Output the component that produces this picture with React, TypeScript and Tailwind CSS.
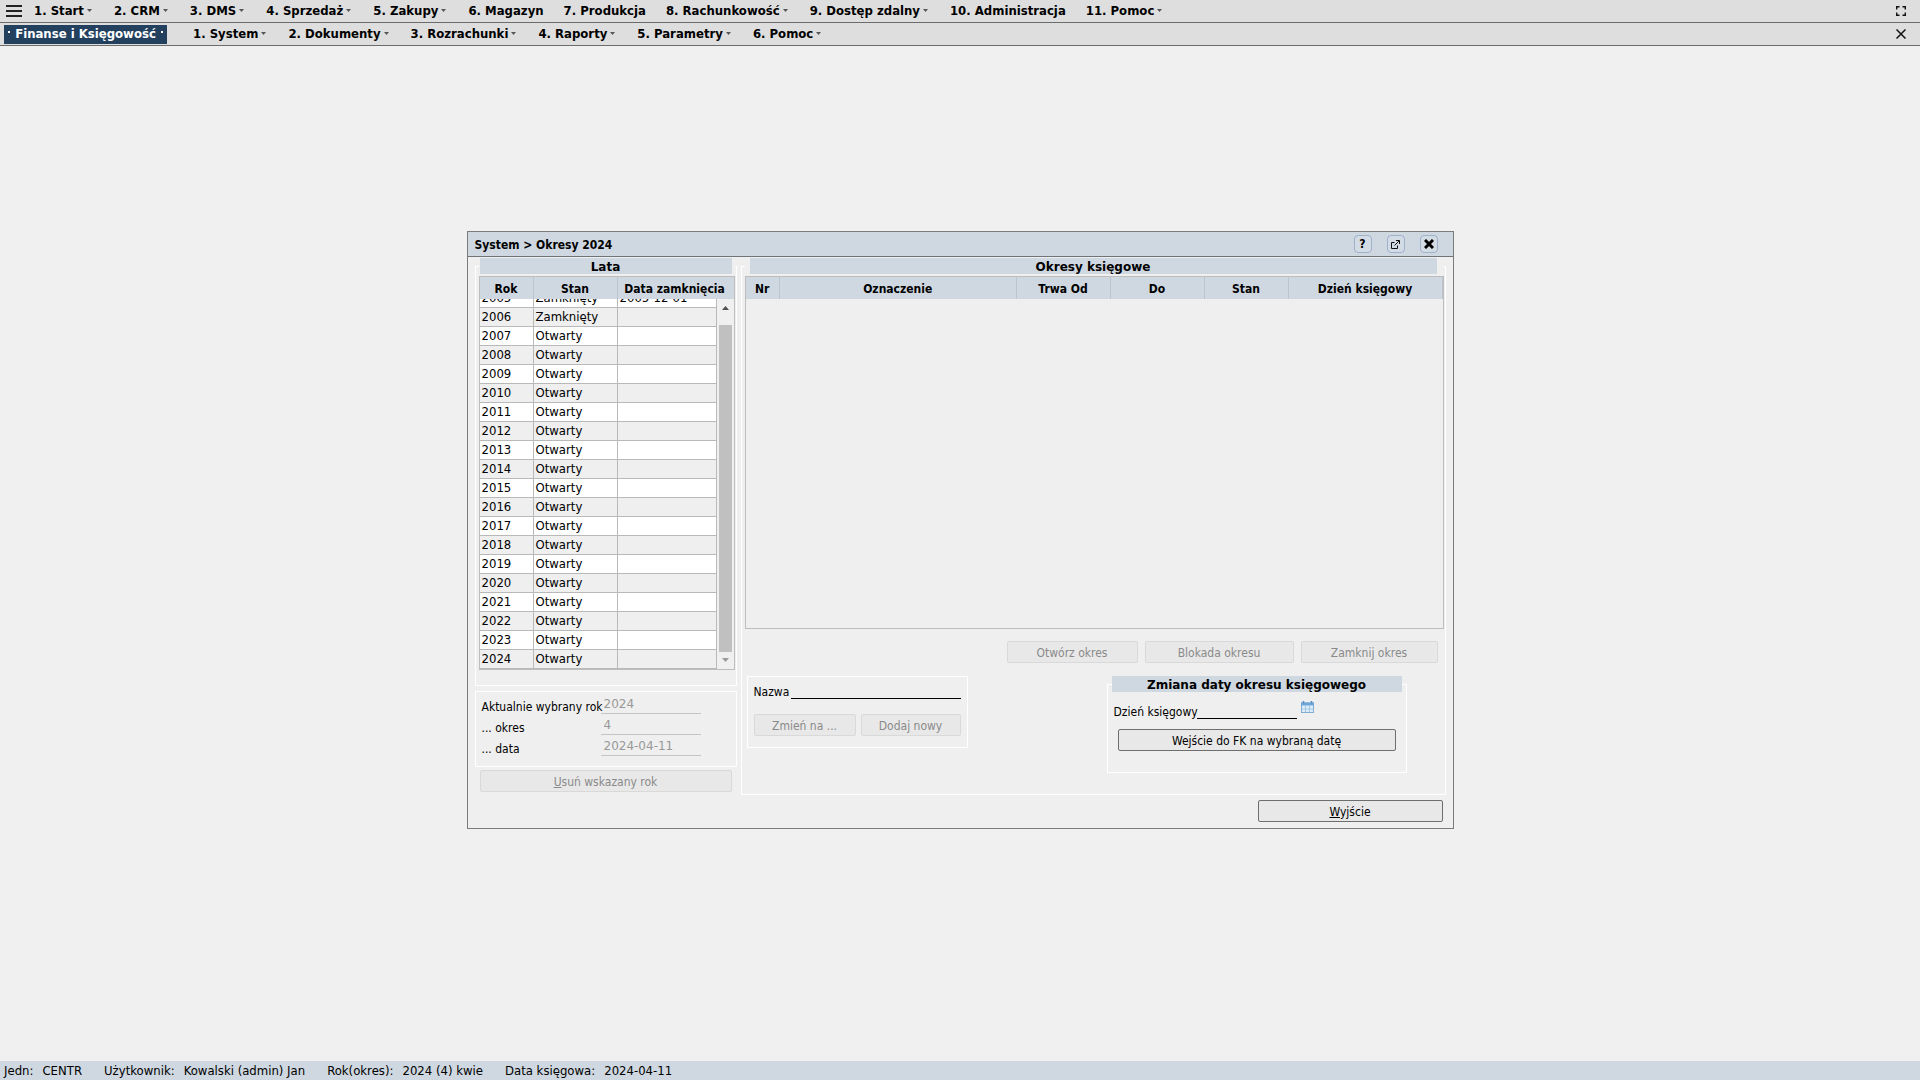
import React from "react";
import clsx from "clsx";

interface MenuEntry {
  label: string;
  plain?: boolean;
}

const mainMenu: MenuEntry[] = [
  { label: "1. Start" },
  { label: "2. CRM" },
  { label: "3. DMS" },
  { label: "4. Sprzedaż" },
  { label: "5. Zakupy" },
  { label: "6. Magazyn", plain: true },
  { label: "7. Produkcja", plain: true },
  { label: "8. Rachunkowość" },
  { label: "9. Dostęp zdalny" },
  { label: "10. Administracja", plain: true },
  { label: "11. Pomoc" },
];

const moduleMenu: MenuEntry[] = [
  { label: "1. System" },
  { label: "2. Dokumenty" },
  { label: "3. Rozrachunki" },
  { label: "4. Raporty" },
  { label: "5. Parametry" },
  { label: "6. Pomoc" },
];

const years = Array.from({ length: 20 }, (_, i) => {
  const year = 2005 + i;
  return {
    year,
    state: year < 2007 ? "Zamknięty" : "Otwarty",
    closed: year === 2005 ? "2005-12-01" : "",
  };
});

const status = [
  ["Jedn:", "CENTR"],
  ["Użytkownik:", "Kowalski (admin) Jan"],
  ["Rok(okres):", "2024 (4) kwie"],
  ["Data księgowa:", "2024-04-11"],
];

const MenuItem = ({ label, plain }: MenuEntry) => (
  <button className="flex items-center gap-[3px] whitespace-nowrap px-[10px] font-bold">
    {label}
    {!plain && (
      <svg className="mr-[2px]" width="5" height="3" viewBox="0 0 5 3" aria-hidden="true">
        <path d="M0 0h5L2.500 3z" fill="#555" />
      </svg>
    )}
  </button>
);

const Button = ({
  children,
  className,
  disabled,
}: {
  children: React.ReactNode;
  className?: string;
  disabled?: boolean;
}) => (
  <button
    disabled={disabled}
    className={clsx(
      "h-[22px] rounded-[2px] border bg-[#e8e8e8] pt-[2px] text-center text-xs leading-[18px]",
      disabled ? "border-[#d9d9d9] text-[#8a8a8a]" : "border-[#6e6e6e] text-black",
      className,
    )}
  >
    {children}
  </button>
);

const Legend = ({ children, className }: { children: React.ReactNode; className?: string }) => (
  <legend className={clsx("w-full", className)}>
    <span className="block h-4 bg-[#cfd8e1] text-center text-xs font-bold leading-[18px] font-['DejaVu_Sans']">
      {children}
    </span>
  </legend>
);

const TitleButton = ({ label, children }: { label: string; children: React.ReactNode }) => (
  <button
    aria-label={label}
    className="flex h-[18px] w-[18px] items-center justify-center rounded-[4px] border border-[#9db1cb] bg-[#d3dce5] text-xs font-bold"
  >
    {children}
  </button>
);

const ReadOnlyRow = ({ id, label, value }: { id: string; label: string; value: string }) => (
  <div className="flex h-[21px] items-end">
    <label htmlFor={id} className="w-[119px] whitespace-nowrap leading-[14px]">
      {label}
    </label>
    <input
      id={id}
      readOnly
      value={value}
      className="h-5 w-[100px] border-b border-[#c4c4c4] bg-transparent px-[3px] text-xs text-[#999] font-['DejaVu_Sans']"
    />
  </div>
);

const yearCols = "grid grid-cols-[54px_84px_1fr]";
const cell = "border-r border-b border-[#b9b9b9] pl-[2px]";

const YearsTable = () => (
  <table className="mt-[2px] flex flex-col border border-[#bdbdbd]">
    <thead className="block bg-[#cfd8e1]">
      <tr className={clsx(yearCols, "h-[22px] text-xs leading-5")}>
        <th className="border-r border-[#bcc5ce] pt-[2px]">Rok</th>
        <th className="border-r border-[#bcc5ce] pt-[2px]">Stan</th>
        <th className="pt-[2px] pr-[2px]">Data zamknięcia</th>
      </tr>
    </thead>
    <tbody className="relative flex h-[370px] flex-col justify-end overflow-hidden pr-[17px]">
      {years.map((row, i) => (
        <tr
          key={row.year}
          className={clsx(
            yearCols,
            "h-[19px] shrink-0 text-[13px] leading-[18px]",
            i % 2 ? "bg-[#efefef]" : "bg-white",
          )}
        >
          <td className={cell}>{row.year}</td>
          <td className={cell}>{row.state}</td>
          <td className={cell}>{row.closed}</td>
        </tr>
      ))}
      <tr className="absolute inset-y-0 right-0 w-[17px] bg-[#f0f0f0]" aria-hidden="true">
        <td className="flex h-full flex-col items-center py-[7px]">
          <svg width="7" height="4" viewBox="0 0 7 4">
            <path d="M0 4h7L3.500 0z" fill="#505050" />
          </svg>
          <div className="mt-[15px] mb-[6px] w-[13px] flex-1 bg-[#c0c0c0]" />
          <svg width="7" height="4" viewBox="0 0 7 4">
            <path d="M0 0h7L3.500 4z" fill="#9a9a9a" />
          </svg>
        </td>
      </tr>
    </tbody>
  </table>
);

const periodHeaders = ["Nr", "Oznaczenie", "Trwa Od", "Do", "Stan", "Dzień księgowy"];

const PeriodsTable = () => (
  <div className="mt-[2px] min-h-[353px] border border-[#bdbdbd]">
    <table className="w-full table-fixed">
      <colgroup>
        <col className="w-[34px]" />
        <col />
        <col className="w-[94px]" />
        <col className="w-[94px]" />
        <col className="w-[84px]" />
        <col className="w-[154px]" />
      </colgroup>
      <thead>
        <tr className="h-[22px] bg-[#cfd8e1] text-xs leading-5">
          {periodHeaders.map((h) => (
            <th key={h} className="border-r border-[#bcc5ce] pt-[2px]">
              {h}
            </th>
          ))}
        </tr>
      </thead>
    </table>
  </div>
);

const OkresyWindow = () => (
  <section className="mx-auto w-full max-w-[987px] border border-[#7b7b7b] bg-[#efefef]">
    <header className="flex h-[25px] items-center justify-between border-b border-[#6f7479] bg-[#cfd8e1] pr-[15px] pl-[7px]">
      <h1 className="pt-[2px] text-xs font-bold">System &gt; Okresy 2024</h1>
      <div className="flex gap-[15px]">
        <TitleButton label="Help">?</TitleButton>
        <TitleButton label="Open in a new window">
          <svg width="9" height="9" viewBox="0 0 9 9" fill="none" stroke="#111">
            <path d="M3.500 2.500h-3v6h6v-3M5 .5h3.500V4M8.300.7L3.500 5.500" />
          </svg>
        </TitleButton>
        <TitleButton label="Close">
          <svg width="10" height="10" viewBox="0 0 10 10" stroke="#000" strokeWidth="3">
            <path d="M1 1l8 8M9 1L1 9" />
          </svg>
        </TitleButton>
      </div>
    </header>

    <div className="flex gap-1 px-[7px] pt-px">
      <div className="w-[262px] shrink-0">
        <fieldset className="border border-white pr-px pb-[15px] pl-[3px]">
          <Legend className="pr-[3px] pl-px">Lata</Legend>
          <YearsTable />
        </fieldset>
        <div className="mt-[5px] border border-white pt-px pb-[10px] pl-[6px]">
          <ReadOnlyRow id="rok" label="Aktualnie wybrany rok" value="2024" />
          <ReadOnlyRow id="okres" label="... okres" value="4" />
          <ReadOnlyRow id="data" label="... data" value="2024-04-11" />
        </div>
        <div className="mt-[3px] flex px-[5px]">
          <Button disabled className="flex-1">
            <u>U</u>suń wskazany rok
          </Button>
        </div>
      </div>

      <fieldset className="min-w-0 flex-1 border border-white pr-px pb-[21px] pl-[3px]">
        <Legend className="pr-[7px] pl-[5px]">Okresy księgowe</Legend>
        <PeriodsTable />
        <div className="mt-3 flex justify-end gap-[7px] pr-[6px]">
          <Button disabled className="w-[131px]">Otwórz okres</Button>
          <Button disabled className="w-[149px]">Blokada okresu</Button>
          <Button disabled className="w-[137px]">Zamknij okres</Button>
        </div>
        <div className="mt-[13px] flex items-start justify-between pr-[37px] pl-[2px]">
          <div className="w-[221px] border border-white px-[6px] pt-[5px] pb-[11px]">
            <div className="flex h-[17px] items-end justify-between">
              <label htmlFor="nazwa" className="leading-[14px]">Nazwa</label>
              <input id="nazwa" className="h-4 w-[170px] border-b border-black bg-transparent text-xs" />
            </div>
            <div className="mt-[15px] flex gap-[5px]">
              <Button disabled className="w-[102px]">Zmień na ...</Button>
              <Button disabled className="flex-1">Dodaj nowy</Button>
            </div>
          </div>
          <fieldset className="w-[300px] border border-white px-1 pb-[21px]">
            <Legend>Zmiana daty okresu księgowego</Legend>
            <div className="mt-[9px] flex h-[18px] items-end pl-[2px]">
              <label htmlFor="dzien" className="w-[83px] whitespace-nowrap leading-[14px]">Dzień księgowy</label>
              <input id="dzien" className="h-4 w-[100px] border-b border-black bg-transparent text-xs" />
              <button aria-label="Kalendarz" className="ml-1 self-start">
                <svg width="13" height="12" viewBox="0 0 13 12">
                  <rect x=".5" y="2" width="12" height="9.500" fill="#dcecf8" stroke="#82add3" />
                  <path d="M0 1.500h13v3H0z" fill="#6fa6d8" />
                  <path d="M2.500 0v2.500M10.500 0v2.500" stroke="#5d8dbd" strokeWidth="1.500" />
                  <path d="M1 8h11M4.500 5v6M8.500 5v6" stroke="#a4c8e4" />
                </svg>
              </button>
            </div>
            <div className="mt-[10px] flex px-[6px]">
              <Button className="flex-1">Wejście do FK na wybraną datę</Button>
            </div>
          </fieldset>
        </div>
      </fieldset>
    </div>

    <footer className="flex justify-end pt-[5px] pr-[10px] pb-[6px]">
      <Button className="w-[185px]">
        <u>W</u>yjście
      </Button>
    </footer>
  </section>
);

export default function App() {
  return (
    <div className="flex min-h-screen flex-col bg-[#f0f0f0] font-['DejaVu_Sans_Condensed','DejaVu_Sans',sans-serif] text-xs text-black">
      <nav className="flex h-[23px] items-center border-b border-[#6c6c6c] bg-[#dedede] pr-[14px] pl-[6px] text-[13px]">
        <button aria-label="Menu" className="mr-[2px]">
          <svg width="16" height="12" viewBox="0 0 16 12" stroke="#222" strokeWidth="2">
            <path d="M0 1h16M0 6h16M0 11h16" />
          </svg>
        </button>
        {mainMenu.map((m) => (
          <MenuItem key={m.label} {...m} />
        ))}
        <button aria-label="Fullscreen" className="ml-auto">
          <svg width="10" height="10" viewBox="0 0 10 10" fill="none" stroke="#111" strokeWidth="1.400">
            <path d="M.7 3.500V.7h2.800M6.500.7h2.800v2.800M9.300 6.500v2.800H6.500M3.500 9.300H.7V6.500" />
          </svg>
        </button>
      </nav>
      <nav className="flex h-[23px] items-center border-b border-[#6c6c6c] bg-[#dedede] pr-[14px] pl-1 text-[13px]">
        <span className="mr-4 flex h-[19px] w-[163px] items-center justify-between bg-[#23415f] px-1 font-bold whitespace-nowrap text-white">
          <i className="mb-1 h-[2px] w-[2px] bg-white" />
          Finanse i Księgowość
          <i className="mb-1 h-[2px] w-[2px] bg-white" />
        </span>
        {moduleMenu.map((m) => (
          <MenuItem key={m.label} {...m} />
        ))}
        <button aria-label="Close module" className="ml-auto">
          <svg width="10" height="10" viewBox="0 0 10 10" stroke="#111" strokeWidth="1.500">
            <path d="M.5.5l9 9M9.500.5l-9 9" />
          </svg>
        </button>
      </nav>

      <main className="flex-1 pt-[185px]">
        <OkresyWindow />
      </main>

      <footer className="flex h-[19px] items-center gap-[22px] bg-[#cfd8e1] pl-1 text-[13px] whitespace-nowrap">
        {status.map(([name, value]) => (
          <div key={name} className="flex gap-[9px]">
            <span>{name}</span>
            <span>{value}</span>
          </div>
        ))}
      </footer>
    </div>
  );
}
